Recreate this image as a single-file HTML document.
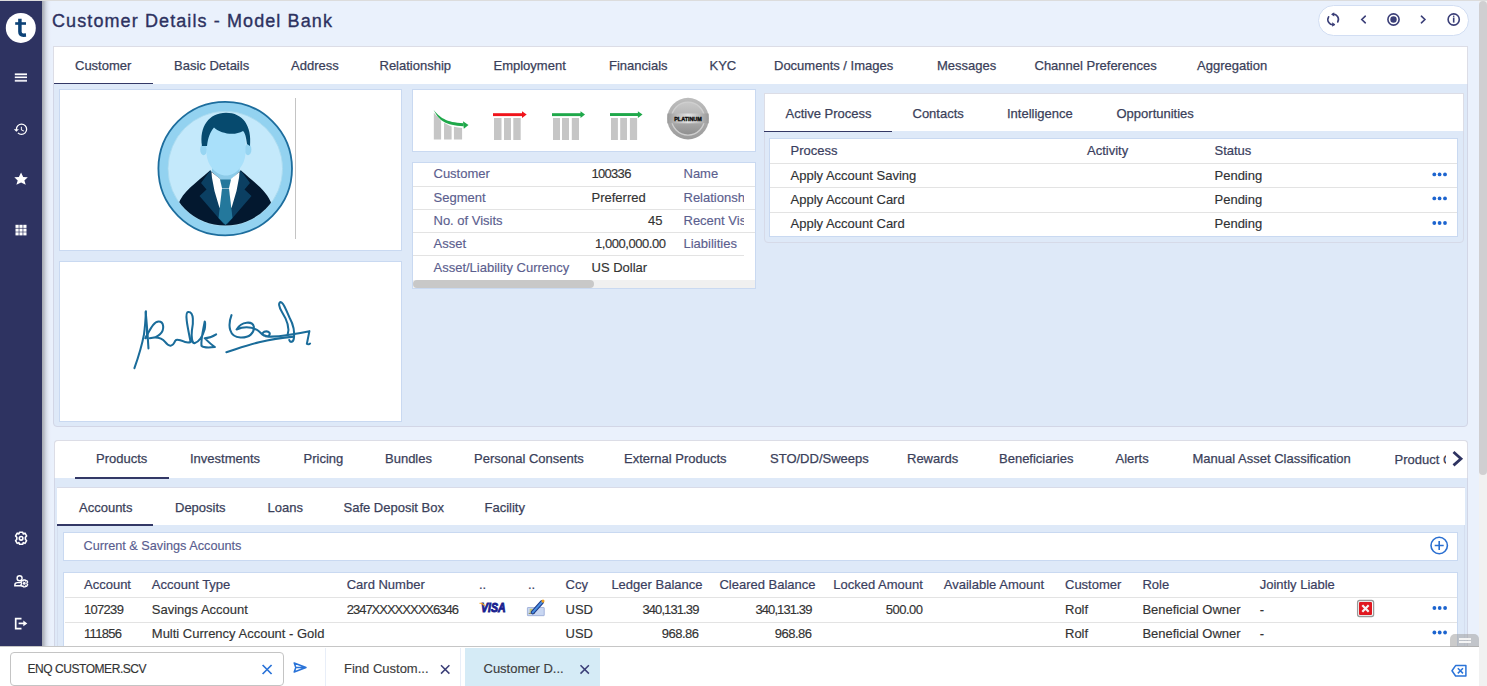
<!DOCTYPE html>
<html><head><meta charset="utf-8">
<style>
*{box-sizing:border-box;margin:0;padding:0}
html,body{width:1487px;height:686px;overflow:hidden}
body{position:relative;background:#eaf1fc;font-family:"Liberation Sans",sans-serif;color:#333}
.a{position:absolute}
.t{position:absolute;white-space:nowrap;line-height:1}
.tab{position:absolute;white-space:nowrap;font-size:13px;color:#3b3f5a;line-height:1;-webkit-text-stroke:0.25px #3b3f5a}
.pnl{position:absolute;background:#fff;border:1px solid #c9d9f1}
.lbl{position:absolute;white-space:nowrap;font-size:13px;color:#5b5e8e;line-height:1;-webkit-text-stroke:0.15px #5b5e8e}
.val{position:absolute;white-space:nowrap;font-size:13px;color:#333;line-height:1;-webkit-text-stroke:0.15px currentColor}
.hd{position:absolute;white-space:nowrap;font-size:13px;color:#3a3e5e;line-height:1;-webkit-text-stroke:0.2px #3a3e5e}
.sep{position:absolute;height:1px;background:#e3e3e3}
</style></head>
<body>
<!-- top strip -->
<div class="a" style="left:0;top:0;width:1487px;height:1px;background:#dcdcdc"></div>
<!-- sidebar -->
<div class="a" style="left:0;top:1px;width:42px;height:645px;background:#2e3361"></div>
<div class="a" style="left:42px;top:1px;width:10px;height:645px;background:linear-gradient(to right,#a5a9b2,#b9bdc7 20%,#d2d8e4 40%,#e1e7f3 60%,#e9effb 80%,#eaf1fc)"></div>


<!-- sidebar icons -->
<svg class="a" style="left:0;top:0" width="42" height="646" viewBox="0 0 42 646">
  <circle cx="20.8" cy="27.9" r="15" fill="#fff"/>
  <rect x="15.2" y="22.2" width="10.8" height="2.6" fill="#0d4277"/>
  <path d="M19.9,18.7 V31.8 Q19.9,35.2 23.4,35.2 L26,35" fill="none" stroke="#0d4277" stroke-width="3.5"/>
  <rect x="14.8" y="73.4" width="12.2" height="1.8" fill="#fff"/>
  <rect x="14.8" y="76.5" width="12.2" height="1.6" fill="#fff"/>
  <rect x="14.8" y="79.8" width="12.2" height="1.9" fill="#e8e8f0"/>
  <g transform="translate(13.2,121.6) scale(0.64)" fill="#fff"><path d="M13 3a9 9 0 0 0-9 9H1l3.89 3.89.07.14L9 12H6c0-3.87 3.13-7 7-7s7 3.13 7 7-3.13 7-7 7c-1.93 0-3.68-.79-4.94-2.06l-1.42 1.42A8.954 8.954 0 0 0 13 21a9 9 0 0 0 0-18zm-1 5v5l4.28 2.54.72-1.21-3.5-2.08V8H12z"/></g>
  <polygon fill="#fff" points="21.06,172.5 23.2,176.9 27.8,177.3 24.4,180.6 25.7,184.8 21.06,182.4 16.4,184.8 17.7,180.6 14.3,177.3 18.9,176.9"/>
  <g fill="#fff">
    <rect x="15.5" y="224.8" width="3.2" height="3.1"/><rect x="19.4" y="224.8" width="3.2" height="3.1"/><rect x="23.3" y="224.8" width="3.2" height="3.1"/>
    <rect x="15.5" y="228.6" width="3.2" height="3.1"/><rect x="19.4" y="228.6" width="3.2" height="3.1"/><rect x="23.3" y="228.6" width="3.2" height="3.1"/>
    <rect x="15.5" y="232.3" width="3.2" height="3.1"/><rect x="19.4" y="232.3" width="3.2" height="3.1"/><rect x="23.3" y="232.3" width="3.2" height="3.1"/>
  </g>
  <g transform="translate(21.1,538.3)" fill="none" stroke="#fff" stroke-width="1.6" stroke-linejoin="round">
    <path d="M-1.6,-6 L1.6,-6 L2.2,-4.3 L3.9,-5.1 L5.5,-2.4 L4.3,-1 L4.3,1 L5.5,2.4 L3.9,5.1 L2.2,4.3 L1.6,6 L-1.6,6 L-2.2,4.3 L-3.9,5.1 L-5.5,2.4 L-4.3,1 L-4.3,-1 L-5.5,-2.4 L-3.9,-5.1 L-2.2,-4.3 Z"/>
    <circle cx="0" cy="0" r="1.8"/>
  </g>
  <g fill="none" stroke="#fff" stroke-width="1.4">
    <circle cx="19.6" cy="578.2" r="2.5"/>
    <path d="M21,582.6 H17.5 Q14.8,582.6 14.8,585.2 V585.8 H21"/>
  </g>
  <g transform="translate(24.3,583.4)" fill="none" stroke="#fff" stroke-width="1.3" stroke-linejoin="round">
    <path d="M-1,-3.4 L1,-3.4 L1.3,-2.4 L2.5,-2.9 L3.4,-1.3 L2.6,-0.5 L2.6,0.5 L3.4,1.3 L2.5,2.9 L1.3,2.4 L1,3.4 L-1,3.4 L-1.3,2.4 L-2.5,2.9 L-3.4,1.3 L-2.6,0.5 L-2.6,-0.5 L-3.4,-1.3 L-2.5,-2.9 L-1.3,-2.4 Z"/>
    <circle cx="0" cy="0" r="0.8"/>
  </g>
  <path d="M21.5,618.7 H15.7 V628.7 H21.5" fill="none" stroke="#fff" stroke-width="1.7"/>
  <path d="M18.6,623.4 H24.5" fill="none" stroke="#fff" stroke-width="1.7"/>
  <polygon points="23.3,620.6 27.3,623.4 23.3,626.2" fill="#fff"/>
</svg>

<!-- header pill icons -->
<div class="a" style="left:1318px;top:5px;width:151px;height:31px;border-radius:16px;background:#fff;border:1px solid #d2def3"></div>
<svg class="a" style="left:1318px;top:5px" width="151" height="31" viewBox="1318 5 151 31">
  <g fill="none" stroke="#3b3f78" stroke-width="1.6" stroke-linecap="round">
    <path d="M1332.5,14.2 A5.2,5.2 0 0 1 1337.7,22"/>
    <path d="M1334,24.6 A5.2,5.2 0 0 1 1328.6,16.8"/>
    <path d="M1365.3,16.2 L1361.8,19.5 L1365.3,22.8"/>
    <path d="M1421.4,16.2 L1424.9,19.5 L1421.4,22.8"/>
    <circle cx="1393.5" cy="19.5" r="5.6"/>
    <circle cx="1453.7" cy="19.5" r="5.6"/>
    <path d="M1453.7,17.5 V22.6" stroke-linecap="butt"/>
  </g>
  <polygon points="1334.2,12.2 1334.2,16.6 1331.2,14.4" fill="#3b3f78"/>
  <polygon points="1332.2,22.3 1332.2,26.7 1335.2,24.5" fill="#3b3f78"/>
  <circle cx="1393.5" cy="19.5" r="3.2" fill="#3b3f78"/>
  <circle cx="1453.7" cy="16.2" r="0.8" fill="#3b3f78"/>
</svg>

<!-- title -->
<div class="t" style="left:52px;top:12px;font-size:18px;color:#2d3160;letter-spacing:1.1px;-webkit-text-stroke:0.35px #2d3160">Customer Details - Model Bank</div>

<!-- header pill -->


<!-- scrollbar -->
<div class="a" style="left:1479px;top:1px;width:8px;height:685px;background:#f1f1f1"></div>
<div class="a" style="left:1479px;top:1px;width:8px;height:474px;background:#d0cfd1;border-radius:4px"></div>

<!-- main tab panel -->
<div class="a" style="left:53px;top:45.5px;width:1415px;height:381.5px;background:#dee9f8;border:1px solid #d2d6e6;border-radius:0 0 4px 4px"></div>
<div class="a" style="left:53px;top:45.5px;width:1415px;height:38.5px;background:#fff;border:1px solid #dcdde6;border-bottom:none"></div>
<div class="a" style="left:54px;top:82.6px;width:99px;height:1.7px;background:#333866"></div>
<div class="tab" style="left:75px;top:59.4px">Customer</div>
<div class="tab" style="left:174px;top:59.4px">Basic Details</div>
<div class="tab" style="left:291px;top:59.4px">Address</div>
<div class="tab" style="left:379.5px;top:59.4px">Relationship</div>
<div class="tab" style="left:493.5px;top:59.4px">Employment</div>
<div class="tab" style="left:609px;top:59.4px">Financials</div>
<div class="tab" style="left:709.5px;top:59.4px">KYC</div>
<div class="tab" style="left:774px;top:59.4px">Documents / Images</div>
<div class="tab" style="left:937px;top:59.4px">Messages</div>
<div class="tab" style="left:1034.5px;top:59.4px">Channel Preferences</div>
<div class="tab" style="left:1197px;top:59.4px">Aggregation</div>

<!-- avatar panel -->
<div class="pnl" style="left:59px;top:89px;width:343px;height:162px"></div>
<div class="a" style="left:295px;top:98px;width:1px;height:141px;background:#c4c4c4"></div>


<svg class="a" style="left:155px;top:99px" width="140" height="140" viewBox="0 0 140 140">
  <defs><clipPath id="ic"><circle cx="70.3" cy="69.6" r="57"/></clipPath></defs>
  <circle cx="70.2" cy="69.6" r="66.8" fill="#93d2f0" stroke="#1d6d9d" stroke-width="1.8"/>
  <circle cx="70.3" cy="69.6" r="57.3" fill="#c4e9fb" stroke="#a9d9ee" stroke-width="0.8"/>
  <g clip-path="url(#ic)">
    <!-- neck -->
    <path d="M58.5,60 L84,60 L85,79 L70.5,88 L56,79 Z" fill="#8ccbe9"/>
    <!-- ears -->
    <ellipse cx="48.6" cy="50.5" rx="3.4" ry="5.8" fill="#97d5f2"/>
    <ellipse cx="93" cy="50.5" rx="3.4" ry="5.8" fill="#97d5f2"/>
    <!-- face -->
    <path d="M51.5,35 C51.5,25 60,20 71,20 C82,20 90.5,25 90.5,35 L90.5,53 C90.5,66 81,76.5 71,76.5 C61,76.5 51.5,66 51.5,53 Z" fill="#a9e0fa"/>
    <!-- hair -->
    <path d="M47,47 C44,28 54,13.8 71,13.8 C88,13.8 97,27 95,47 L92,45 C91,37 90,34 88,32 C80,37 66,35 59,28.5 C55,33 53,39 52,47 Z" fill="#064a6e"/>
    <!-- suit -->
    <path d="M23,106 C28,92 40,85 55,71.5 L71,85 L86,71.5 C101,85 112,92 117,106 L122,140 L18,140 Z" fill="#03182f"/>
    <!-- shirt -->
    <path d="M56.5,73 L64,79 L70.5,85 L77,79 L84.5,73 L85,96 L70.5,118 L56,96 Z" fill="#fff"/>
    <!-- lapels -->
    <path d="M55.5,71 L46,84 L51.5,90.5 L44.5,97 L69.5,126 L59.5,92 Z" fill="#0b3f62"/>
    <path d="M85.5,71 L95,84 L89.5,90.5 L96.5,97 L71.5,126 L81.5,92 Z" fill="#0b3f62"/>
    <!-- tie -->
    <path d="M65,80.5 L76,80.5 L74,89 L67,89 Z" fill="#24789c"/>
    <path d="M67,89.5 L74,89.5 L77.5,119 L70.5,126 L63.5,119 Z" fill="#24789c"/>
  </g>
</svg>

<!-- signature panel -->
<div class="pnl" style="left:59px;top:261px;width:343px;height:161px"></div>

<!-- icons panel -->
<div class="pnl" style="left:412px;top:89px;width:344px;height:63px"></div>


<svg class="a" style="left:128px;top:296px" width="190" height="76" viewBox="0 0 1487 595">
  <g fill="none" stroke="#1a6c9a" stroke-width="16" stroke-linecap="round" stroke-linejoin="round">
    <path d="M50,565 C80,480 110,380 125,300 C135,230 138,170 140,120"/>
    <path d="M160,410 C155,330 150,250 138,125"/>
    <path d="M148,260 L150,330"/>
    <path d="M135,330 C175,260 200,200 240,200 C280,200 290,260 250,300 C230,320 200,330 170,330 C220,320 260,320 290,360 C320,400 350,400 370,350 C380,335 400,345 420,350 C440,360 470,370 490,360 C470,260 440,130 470,125 C520,120 510,220 500,270 C495,320 500,370 520,370 C550,360 580,330 600,260 C605,230 605,200 600,200 C590,260 570,330 575,390 C590,405 640,405 680,400 C650,380 620,350 600,330 C630,330 660,320 690,300"/>
    <path d="M810,150 C780,230 790,320 880,325 C950,328 990,290 985,240 C975,195 890,195 850,262 C900,240 960,240 1010,265 C1040,280 1050,320 1095,315 C1125,300 1105,268 1065,280 C1040,295 1060,325 1120,318 C1200,315 1300,300 1420,275 L1400,375 C1405,380 1420,380 1425,372"/>
    <path d="M770,440 C900,400 1020,345 1300,318"/>
    <path d="M1250,300 C1270,240 1240,180 1205,125 C1180,85 1175,50 1195,48 C1220,50 1235,110 1265,170 C1295,225 1305,290 1298,335 C1292,365 1268,365 1262,345"/>
  </g>
</svg>

<svg class="a" style="left:428px;top:104px" width="44" height="40" viewBox="0 0 755 686">
  <path d="M100,150 C150,200 190,250 225,290 L225,610 L100,610 Z" fill="#c6c6c6"/>
  <path d="M275,320 C320,345 360,370 405,385 L405,610 L275,610 Z" fill="#c6c6c6"/>
  <path d="M445,390 C490,398 540,404 585,410 L585,610 L445,610 Z" fill="#c6c6c6"/>
  <path d="M95,100 C200,230 310,320 610,330 L610,380 C300,370 190,290 95,100 Z" fill="#1fa84a"/>
  <polygon points="600,295 695,360 615,425" fill="#1fa84a"/>
</svg>
<svg class="a" style="left:488px;top:108px" width="160" height="35" viewBox="488 108 160 35">
  <g fill="#c6c6c6">
    <rect x="494" y="118" width="7.5" height="22"/><rect x="504" y="118" width="7" height="22"/><rect x="513.3" y="118" width="7.4" height="22"/>
    <rect x="553" y="118" width="7" height="22"/><rect x="562" y="118" width="7" height="22"/><rect x="571.8" y="118" width="7.2" height="22"/>
    <rect x="611" y="118" width="6.9" height="22"/><rect x="620.2" y="118" width="6.8" height="22"/><rect x="629.9" y="118" width="7.2" height="22"/>
  </g>
  <rect x="493" y="113.2" width="30" height="2.9" fill="#f0141b"/>
  <polygon points="522,111.2 526.7,114.6 522,118" fill="#f0141b"/>
  <rect x="552" y="113.2" width="29" height="2.9" fill="#1fa84a"/>
  <polygon points="580.5,111.2 585,114.6 580.5,118" fill="#1fa84a"/>
  <rect x="610" y="113.1" width="28" height="2.9" fill="#1fa84a"/>
  <polygon points="637.9,111.3 642.5,114.6 637.9,118" fill="#1fa84a"/>
</svg>
<svg class="a" style="left:664px;top:95px" width="48" height="48" viewBox="0 0 48 48">
  <defs>
    <linearGradient id="bg1" x1="0" y1="0" x2="0" y2="1"><stop offset="0" stop-color="#bdbdbd"/><stop offset="1" stop-color="#9c9c9c"/></linearGradient>
    <linearGradient id="bg2" x1="0" y1="0" x2="0" y2="1"><stop offset="0" stop-color="#c9c9c9"/><stop offset="0.5" stop-color="#b0b0b0"/><stop offset="1" stop-color="#8e8e8e"/></linearGradient>
    <linearGradient id="bg3" x1="0" y1="0" x2="1" y2="0"><stop offset="0" stop-color="#9a9a9a"/><stop offset="0.5" stop-color="#e2e2e2"/><stop offset="1" stop-color="#9a9a9a"/></linearGradient>
  </defs>
  <circle cx="24" cy="23.6" r="20.8" fill="url(#bg1)"/>
  <circle cx="24" cy="23.6" r="16.5" fill="url(#bg2)" stroke="#cfcfcf" stroke-width="1.4"/>
  <rect x="3.4" y="18.5" width="41.2" height="9.8" fill="url(#bg3)"/>
  <text x="24" y="26" text-anchor="middle" font-family="Liberation Sans" font-weight="bold" font-size="5.6" fill="#0a0a0a" stroke="#0a0a0a" stroke-width="0.35" textLength="27.5" lengthAdjust="spacingAndGlyphs">PLATINUM</text>
</svg>

<!-- details panel -->
<div class="pnl" style="left:412px;top:162px;width:344px;height:127px"></div>

<!-- active process panel -->
<div class="a" style="left:764px;top:93px;width:700px;height:150px;background:#dee9f8;border:1px solid #d6dae8;border-radius:0 0 4px 4px"></div>
<div class="a" style="left:764px;top:93px;width:700px;height:38px;background:#fff;border:1px solid #dcdde6;border-bottom:none"></div>
<div class="a" style="left:764px;top:131px;width:128px;height:1.4px;background:#333866"></div>
<div class="pnl" style="left:769px;top:138px;width:689px;height:99px"></div>

<!-- products panel -->
<div class="a" style="left:53.5px;top:439.5px;width:1414px;height:260px;background:#dee9f8;border:1px solid #d2d6e6;border-radius:4px"></div>
<div class="a" style="left:53.5px;top:439.5px;width:1414px;height:38.5px;background:#fff;border:1px solid #dcdde6;border-bottom:none;border-radius:4px 4px 0 0"></div>
<div class="a" style="left:75px;top:476.9px;width:94px;height:1.7px;background:#333866"></div>

<!-- accounts subpanel -->
<div class="a" style="left:57px;top:487px;width:1407.5px;height:200px;background:#dee9f8;border:1px solid #d5deef"></div>
<div class="a" style="left:57px;top:487px;width:1407.5px;height:38px;background:#fff;border-top:1px solid #d8dbe8"></div>
<div class="a" style="left:57px;top:524.1px;width:96px;height:1.8px;background:#333866"></div>

<!-- C&S panel -->
<div class="pnl" style="left:63px;top:531.5px;width:1394.5px;height:29px"></div>
<!-- table panel -->
<div class="pnl" style="left:63px;top:571.5px;width:1394.5px;height:100px"></div>


<!-- details table text -->
<div class="sep" style="left:413px;top:186px;width:342px"></div>
<div class="sep" style="left:413px;top:209px;width:342px"></div>
<div class="sep" style="left:413px;top:232px;width:342px"></div>
<div class="sep" style="left:413px;top:255px;width:331px"></div>
<div class="lbl" style="left:433.5px;top:167px">Customer</div>
<div class="lbl" style="left:433.5px;top:190.5px">Segment</div>
<div class="lbl" style="left:433.5px;top:214px">No. of Visits</div>
<div class="lbl" style="left:433.5px;top:237px">Asset</div>
<div class="lbl" style="left:433.5px;top:261px">Asset/Liability Currency</div>
<div class="val" style="left:591.5px;top:167px;letter-spacing:-0.7px">100336</div>
<div class="val" style="left:591.5px;top:190.5px">Preferred</div>
<div class="val" style="left:591.5px;top:214px;width:71px;text-align:right">45</div>
<div class="val" style="left:565px;top:237px;width:100.5px;text-align:right;letter-spacing:-0.45px">1,000,000.00</div>
<div class="val" style="left:591.5px;top:261px">US Dollar</div>
<div class="lbl" style="left:683.5px;top:167px">Name</div>
<div class="lbl" style="left:683.5px;top:190.5px;width:60px;overflow:hidden">Relationship</div>
<div class="lbl" style="left:683.5px;top:214px;width:60px;overflow:hidden">Recent Visit</div>
<div class="lbl" style="left:683.5px;top:237px">Liabilities</div>
<div class="a" style="left:413px;top:279.5px;width:342px;height:8px;background:#f0f0f0"></div>
<div class="a" style="left:413px;top:279.5px;width:181px;height:8px;background:#c8c8c8;border-radius:4px"></div>

<!-- active process -->
<div class="tab" style="left:785.5px;top:106.5px">Active Process</div>
<div class="tab" style="left:912.5px;top:106.5px">Contacts</div>
<div class="tab" style="left:1007px;top:106.5px">Intelligence</div>
<div class="tab" style="left:1116.5px;top:106.5px">Opportunities</div>
<div class="sep" style="left:770px;top:163px;width:687px"></div>
<div class="sep" style="left:770px;top:187px;width:687px"></div>
<div class="sep" style="left:770px;top:212px;width:687px"></div>
<div class="hd" style="left:790.5px;top:144px">Process</div>
<div class="hd" style="left:1087px;top:144px">Activity</div>
<div class="hd" style="left:1214.5px;top:144px">Status</div>
<div class="val" style="left:790.5px;top:169px;color:#2f3133">Apply Account Saving</div>
<div class="val" style="left:790.5px;top:193px;color:#2f3133">Apply Account Card</div>
<div class="val" style="left:790.5px;top:217px;color:#2f3133">Apply Account Card</div>
<div class="val" style="left:1214.5px;top:169px;color:#2f3133">Pending</div>
<div class="val" style="left:1214.5px;top:193px;color:#2f3133">Pending</div>
<div class="val" style="left:1214.5px;top:217px;color:#2f3133">Pending</div>


<!-- dots in process table -->
<svg class="a" style="left:1428px;top:168px" width="24" height="60" viewBox="1428 168 24 60">
  <g fill="#1c64cf">
    <circle cx="1434.3" cy="174.4" r="1.9"/><circle cx="1439.6" cy="174.4" r="1.9"/><circle cx="1445" cy="174.4" r="1.9"/>
    <circle cx="1434.3" cy="198.4" r="1.9"/><circle cx="1439.6" cy="198.4" r="1.9"/><circle cx="1445" cy="198.4" r="1.9"/>
    <circle cx="1434.3" cy="223" r="1.9"/><circle cx="1439.6" cy="223" r="1.9"/><circle cx="1445" cy="223" r="1.9"/>
  </g>
</svg>

<!-- products tabs -->
<div class="tab" style="left:96px;top:452px">Products</div>
<div class="tab" style="left:190px;top:452px">Investments</div>
<div class="tab" style="left:303.5px;top:452px">Pricing</div>
<div class="tab" style="left:385px;top:452px">Bundles</div>
<div class="tab" style="left:474px;top:452px">Personal Consents</div>
<div class="tab" style="left:624px;top:452px">External Products</div>
<div class="tab" style="left:770px;top:452px">STO/DD/Sweeps</div>
<div class="tab" style="left:907px;top:452px">Rewards</div>
<div class="tab" style="left:999px;top:452px">Beneficiaries</div>
<div class="tab" style="left:1115.5px;top:452px">Alerts</div>
<div class="tab" style="left:1192.5px;top:452px">Manual Asset Classification</div>
<div class="tab" style="left:1394.5px;top:453px;width:52px;overflow:hidden">Product Condition</div>

<!-- accounts tabs -->
<div class="tab" style="left:79px;top:501px">Accounts</div>
<div class="tab" style="left:175px;top:501px">Deposits</div>
<div class="tab" style="left:267.5px;top:501px">Loans</div>
<div class="tab" style="left:343.5px;top:501px">Safe Deposit Box</div>
<div class="tab" style="left:484.5px;top:501px">Facility</div>

<div class="lbl" style="left:83.5px;top:539.5px;font-size:12.7px;color:#595d8f">Current &amp; Savings Accounts</div>

<!-- accounts table -->
<div class="sep" style="left:64.5px;top:597px;width:1392px"></div>
<div class="sep" style="left:64.5px;top:622px;width:1392px"></div>
<div class="hd" style="left:84px;top:578px">Account</div>
<div class="hd" style="left:151.8px;top:578px">Account Type</div>
<div class="hd" style="left:346.7px;top:578px">Card Number</div>
<div class="hd" style="left:479px;top:578px">..</div>
<div class="hd" style="left:528px;top:578px">..</div>
<div class="hd" style="left:565.5px;top:578px">Ccy</div>
<div class="hd" style="left:611.4px;top:578px">Ledger Balance</div>
<div class="hd" style="left:719.4px;top:578px">Cleared Balance</div>
<div class="hd" style="left:833.2px;top:578px">Locked Amount</div>
<div class="hd" style="left:943.8px;top:578px">Available Amount</div>
<div class="hd" style="left:1065px;top:578px">Customer</div>
<div class="hd" style="left:1142.4px;top:578px">Role</div>
<div class="hd" style="left:1259.7px;top:578px">Jointly Liable</div>

<div class="val" style="left:84px;top:603px;letter-spacing:-0.7px">107239</div>
<div class="val" style="left:151.8px;top:603px">Savings Account</div>
<div class="val" style="left:346.7px;top:603px;letter-spacing:-1px">2347XXXXXXXX6346</div>
<div class="val" style="left:565.5px;top:603px">USD</div>
<div class="val" style="left:598px;top:603px;width:100.5px;text-align:right;letter-spacing:-0.9px">340,131.39</div>
<div class="val" style="left:711px;top:603px;width:100.5px;text-align:right;letter-spacing:-0.9px">340,131.39</div>
<div class="val" style="left:822px;top:603px;width:100.5px;text-align:right;letter-spacing:-0.5px">500.00</div>
<div class="val" style="left:1065px;top:603px">Rolf</div>
<div class="val" style="left:1142.4px;top:603px">Beneficial Owner</div>
<div class="val" style="left:1259.7px;top:603px">-</div>

<div class="val" style="left:84px;top:627px;letter-spacing:-0.7px">111856</div>
<div class="val" style="left:151.8px;top:627px">Multi Currency Account - Gold</div>
<div class="val" style="left:565.5px;top:627px">USD</div>
<div class="val" style="left:598px;top:627px;width:100.5px;text-align:right;letter-spacing:-0.5px">968.86</div>
<div class="val" style="left:711px;top:627px;width:100.5px;text-align:right;letter-spacing:-0.5px">968.86</div>
<div class="val" style="left:1065px;top:627px">Rolf</div>
<div class="val" style="left:1142.4px;top:627px">Beneficial Owner</div>
<div class="val" style="left:1259.7px;top:627px">-</div>


<!-- table icons -->
<svg class="a" style="left:474px;top:596px" width="76" height="24" viewBox="0 0 1487 470">
    <text x="378" y="318" text-anchor="middle" font-family="Liberation Sans" font-weight="bold" font-style="italic" font-size="235" fill="#1a1f8f" stroke="#1a1f8f" stroke-width="18" textLength="480" lengthAdjust="spacingAndGlyphs">VISA</text>
  <path d="M95,140 C140,125 190,135 215,190 L205,200 C180,165 140,150 95,140 Z" fill="#f5a623"/>
  <rect x="1045" y="225" width="330" height="160" rx="10" fill="#c9d7f2" stroke="#8b9fd0" stroke-width="14"/>
  <rect x="1070" y="330" width="120" height="20" fill="#8a8a4a"/>
  <rect x="1090" y="250" width="60" height="70" fill="#c2c250" opacity="0.8"/>
  <path d="M1150,320 L1330,120" stroke="#1e3a8a" stroke-width="80" stroke-linecap="round"/>
  <path d="M1150,320 L1330,120" stroke="#4a90e2" stroke-width="40" stroke-linecap="round"/>
  <circle cx="1350" cy="100" r="30" fill="#f0a020"/>
</svg>
<svg class="a" style="left:1356px;top:599px" width="20" height="20" viewBox="1356 599 20 20">
  <rect x="1357.6" y="600.5" width="16" height="16" rx="2" fill="#fff" stroke="#9a9a9a" stroke-width="1.3"/>
  <rect x="1359" y="602" width="13" height="13" rx="1" fill="#e01820"/>
  <path d="M1362.3,605.3 L1368.7,611.7 M1368.7,605.3 L1362.3,611.7" stroke="#f4f4f4" stroke-width="2.2"/>
</svg>
<svg class="a" style="left:1428px;top:600px" width="24" height="40" viewBox="1428 600 24 40">
  <g fill="#1c64cf">
    <circle cx="1434.4" cy="608" r="1.9"/><circle cx="1439.7" cy="608" r="1.9"/><circle cx="1445.1" cy="608" r="1.9"/>
    <circle cx="1434.4" cy="632.5" r="1.9"/><circle cx="1439.7" cy="632.5" r="1.9"/><circle cx="1445.1" cy="632.5" r="1.9"/>
  </g>
</svg>
<!-- plus circle -->
<svg class="a" style="left:1428px;top:534px" width="24" height="24" viewBox="1428 534 24 24">
  <circle cx="1439.2" cy="545.5" r="8.2" fill="none" stroke="#2a6fd1" stroke-width="1.6"/>
  <path d="M1439.2,541 V550 M1434.7,545.5 H1443.7" stroke="#2a6fd1" stroke-width="1.6"/>
</svg>
<!-- chevron -->
<div class="a" style="left:1446px;top:442px;width:20px;height:36px;background:#fff"></div>
<svg class="a" style="left:1446px;top:445px" width="22" height="28" viewBox="1446 445 22 28">
  <path d="M1453.5,452 L1461,458.7 L1453.5,465.4" fill="none" stroke="#2e3361" stroke-width="2.8" stroke-linejoin="miter"/>
</svg>

<!-- bottom bar -->
<div class="a" style="left:0;top:646px;width:1479px;height:40px;background:#fff;border-top:1px solid #c6c6c6"></div>
<div class="a" style="left:10px;top:652px;width:274px;height:34px;border:1px solid #c4c4c4;border-radius:4px;background:#fff"></div>
<div class="a" style="left:465px;top:648px;width:135px;height:38px;background:#d5ebf6"></div>


<div class="val" style="left:27.5px;top:663px;font-size:12px;color:#333;letter-spacing:-0.45px">ENQ CUSTOMER.SCV</div>
<div class="val" style="left:344px;top:662px;font-size:13px;color:#3d3d3d">Find Custom...</div>
<div class="val" style="left:483.5px;top:662px;font-size:13px;color:#3d3d3d">Customer D...</div>

<div class="a" style="left:325px;top:648px;width:1px;height:38px;background:#e8eef8"></div>
<div class="a" style="left:460px;top:648px;width:1px;height:38px;background:#e8eef8"></div>
<svg class="a" style="left:0;top:646px" width="1487" height="40" viewBox="0 646 1487 40">
  <path d="M262.6,665 L271.6,674 M271.6,665 L262.6,674" stroke="#2a73d8" stroke-width="1.7"/>
  <path d="M294.2,663 L306,667.5 L294.2,672 L295.8,667.5 Z M295.8,667.5 H306" fill="none" stroke="#2a73d8" stroke-width="1.5" stroke-linejoin="round"/>
  <path d="M441,665.2 L449.4,673.6 M449.4,665.2 L441,673.6" stroke="#3b3f78" stroke-width="1.5"/>
  <path d="M580.5,665.2 L588.9,673.6 M588.9,665.2 L580.5,673.6" stroke="#3b3f78" stroke-width="1.5"/>
  <path d="M1455.6,665.6 H1465.9 V676 H1455.6 L1452,670.8 Z" fill="none" stroke="#2a73d8" stroke-width="1.5" stroke-linejoin="round"/>
  <path d="M1457.8,668.3 L1463,673.4 M1463,668.3 L1457.8,673.4" stroke="#2a73d8" stroke-width="1.5"/>
</svg>
<!-- handle -->
<div class="a" style="left:1450px;top:634px;width:29px;height:13px;background:rgba(160,160,160,0.55);border-radius:5px 5px 0 0"></div>
<div class="a" style="left:1459px;top:638.3px;width:12px;height:1.8px;background:#f4f4f4"></div>
<div class="a" style="left:1459px;top:641.3px;width:12px;height:1.8px;background:#f4f4f4"></div>
</body></html>
